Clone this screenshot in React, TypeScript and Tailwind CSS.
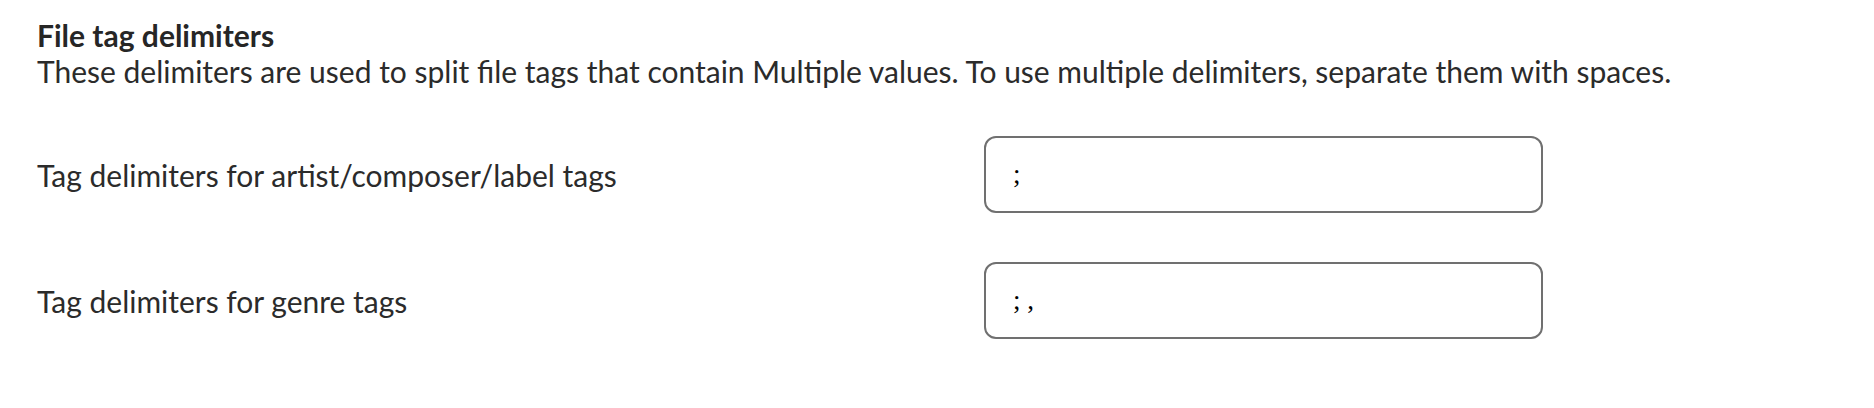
import { useState } from 'react'

const rows = [
  { label: 'Tag delimiters for artist/composer/label tags', value: ';' },
  { label: 'Tag delimiters for genre tags', value: '; ,' },
]

export default function App() {
  const [values, setValues] = useState(rows.map(r => r.value))

  return (
    <div className="min-h-[408px] w-full bg-white pl-[37px] pt-[17px] font-['Lato','Noto_Sans',sans-serif] text-[#2b2b2b]">
      {/* Encabezado */}
      <h3 className="text-[30px] font-bold leading-[36px] text-[#262626]">File tag delimiters</h3>
      <p className="text-[30px] leading-[36px]">
        These delimiters are used to split file tags that contain Multiple values. To use multiple delimiters, separate them with spaces.
      </p>

      {/* Campos */}
      <div className="mt-[47px] flex flex-col gap-[49px]">
        {rows.map((row, i) => (
          <div key={row.label} className="flex items-center">
            <label className="w-[947px] text-[30px] leading-[36px]">{row.label}</label>
            <input
              value={values[i]}
              onChange={e => {
                const next = [...values]
                next[i] = e.target.value
                setValues(next)
              }}
              className="h-[77px] w-[559px] rounded-[12px] border-2 border-[#707070] bg-white pl-[27px] font-['Liberation_Serif',serif] text-[27px] text-black outline-none"
            />
          </div>
        ))}
      </div>
    </div>
  )
}
